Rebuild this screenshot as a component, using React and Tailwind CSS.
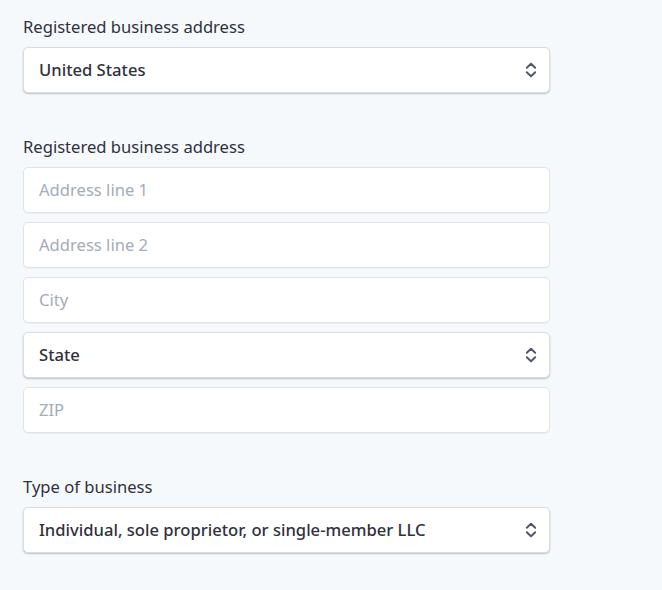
import React from "react";

function Chevrons() {
  return (
    <svg width="12" height="16" viewBox="0 0 12 16" fill="none" className="shrink-0">
      <path d="M1.8 5.8 L6 1.8 L10.2 5.8" stroke="#4f566b" strokeWidth="1.9" strokeLinecap="round" strokeLinejoin="round" />
      <path d="M1.8 10.2 L6 14.2 L10.2 10.2" stroke="#4f566b" strokeWidth="1.9" strokeLinecap="round" strokeLinejoin="round" />
    </svg>
  );
}

function Select({ value }) {
  return (
    <div className="flex h-[46px] w-[527px] items-center justify-between rounded-[5px] border border-[#d9dce1] bg-white pl-[15px] pr-[12px] shadow-[0_1px_2px_rgba(0,0,0,0.18),0_1px_1px_rgba(0,0,0,0.06)]">
      <span className="pt-[1px] text-[16.6px] font-medium text-[#30313d]">{value}</span>
      <Chevrons />
    </div>
  );
}

function Input({ placeholder }) {
  return (
    <div className="flex h-[46px] w-[527px] items-center rounded-[5px] border border-[#e0e3e8] bg-white pl-[15px] shadow-[0_1px_1px_rgba(0,0,0,0.04)]">
      <span className="pt-[1px] text-[16.6px] text-[#a3acb9]">{placeholder}</span>
    </div>
  );
}

function Label({ children }) {
  return <div className="mb-[8px] h-[24px] text-[16.6px] leading-[24px] text-[#30313d]">{children}</div>;
}

export default function App() {
  return (
    <div
      className="h-[590px] w-[662px] bg-[#f6f9fc] pl-[23px] pt-[15px]"
      style={{ fontFamily: '"Noto Sans", sans-serif' }}
    >
      <Label>Registered business address</Label>
      <Select value="United States" />
      <div className="mt-[42px]">
        <Label>Registered business address</Label>
        <div className="flex flex-col gap-[9px]">
          <Input placeholder="Address line 1" />
          <Input placeholder="Address line 2" />
          <Input placeholder="City" />
          <Select value="State" />
          <Input placeholder="ZIP" />
        </div>
      </div>
      <div className="mt-[42px]">
        <Label>Type of business</Label>
        <Select value="Individual, sole proprietor, or single-member LLC" />
      </div>
    </div>
  );
}
